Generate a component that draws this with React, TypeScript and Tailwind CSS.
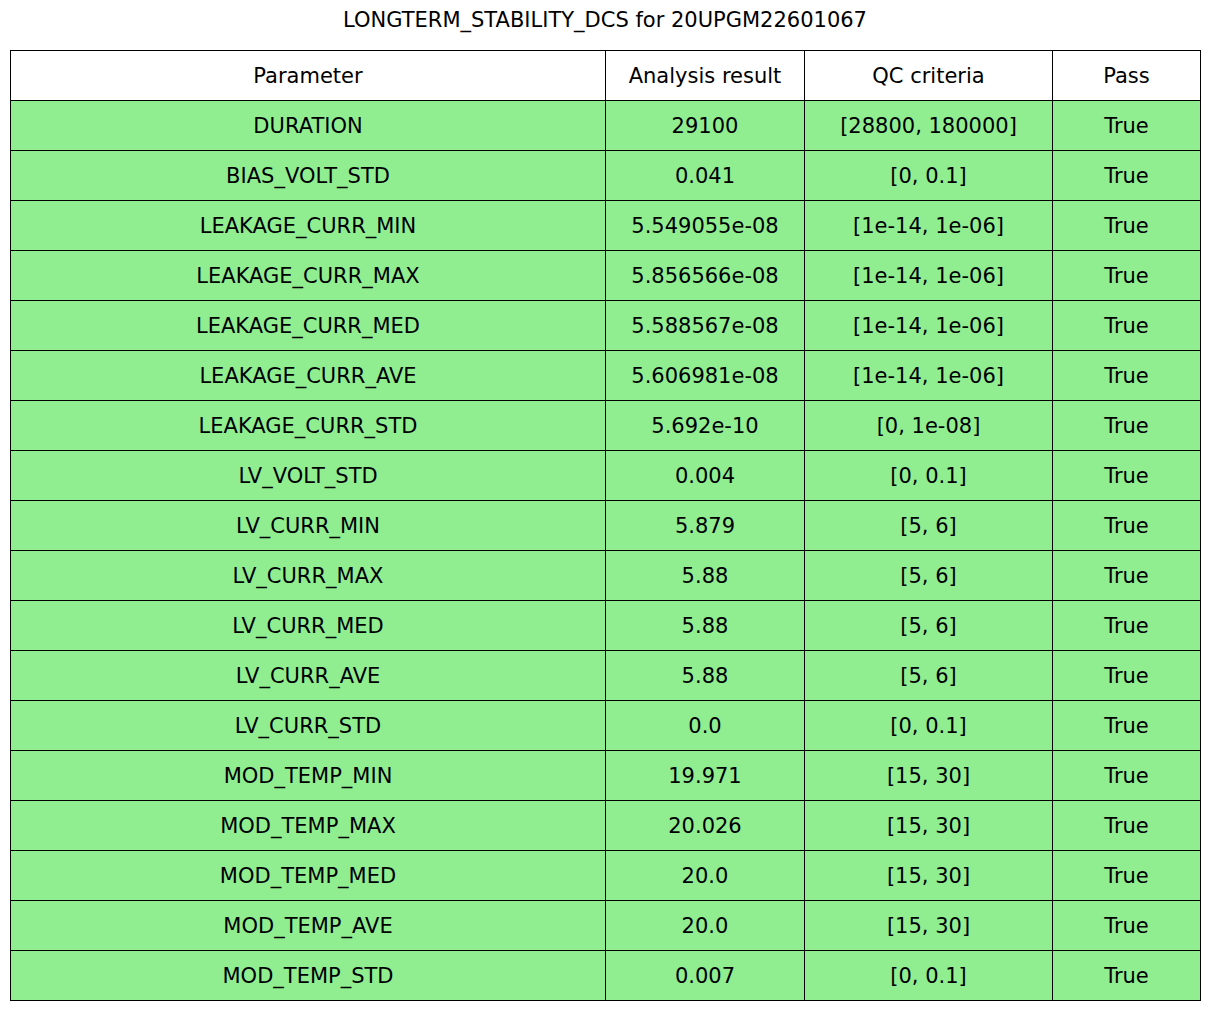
const rows: [string, string, string, string][] = [
  ["DURATION", "29100", "[28800, 180000]", "True"],
  ["BIAS_VOLT_STD", "0.041", "[0, 0.1]", "True"],
  ["LEAKAGE_CURR_MIN", "5.549055e-08", "[1e-14, 1e-06]", "True"],
  ["LEAKAGE_CURR_MAX", "5.856566e-08", "[1e-14, 1e-06]", "True"],
  ["LEAKAGE_CURR_MED", "5.588567e-08", "[1e-14, 1e-06]", "True"],
  ["LEAKAGE_CURR_AVE", "5.606981e-08", "[1e-14, 1e-06]", "True"],
  ["LEAKAGE_CURR_STD", "5.692e-10", "[0, 1e-08]", "True"],
  ["LV_VOLT_STD", "0.004", "[0, 0.1]", "True"],
  ["LV_CURR_MIN", "5.879", "[5, 6]", "True"],
  ["LV_CURR_MAX", "5.88", "[5, 6]", "True"],
  ["LV_CURR_MED", "5.88", "[5, 6]", "True"],
  ["LV_CURR_AVE", "5.88", "[5, 6]", "True"],
  ["LV_CURR_STD", "0.0", "[0, 0.1]", "True"],
  ["MOD_TEMP_MIN", "19.971", "[15, 30]", "True"],
  ["MOD_TEMP_MAX", "20.026", "[15, 30]", "True"],
  ["MOD_TEMP_MED", "20.0", "[15, 30]", "True"],
  ["MOD_TEMP_AVE", "20.0", "[15, 30]", "True"],
  ["MOD_TEMP_STD", "0.007", "[0, 0.1]", "True"],
];

const cell = "h-[50px] border border-black p-0 pt-[1px] text-center align-middle";

export default function App() {
  return (
    <div className="h-[1010px] w-[1210px] bg-white font-['DejaVu_Sans',sans-serif] text-black">
      <div className="pt-[8px] text-center text-[21px] leading-[24px]">LONGTERM_STABILITY_DCS for 20UPGM22601067</div>
      <table className="ml-[10px] mt-[18px] w-[1191px] table-fixed border-collapse text-[21px] leading-[24px]">
        <colgroup>
          <col className="w-[595px]" />
          <col className="w-[199px]" />
          <col className="w-[248px]" />
          <col className="w-[148px]" />
        </colgroup>
        <thead>
          <tr className="bg-white">
            <th className={`${cell} font-normal`}>Parameter</th>
            <th className={`${cell} font-normal`}>Analysis result</th>
            <th className={`${cell} font-normal`}>QC criteria</th>
            <th className={`${cell} font-normal`}>Pass</th>
          </tr>
        </thead>
        <tbody>
          {rows.map((r) => (
            <tr key={r[0]} className="bg-[#90ee90]">
              {r.map((v, i) => (
                <td key={i} className={cell}>{v}</td>
              ))}
            </tr>
          ))}
        </tbody>
      </table>
    </div>
  );
}
